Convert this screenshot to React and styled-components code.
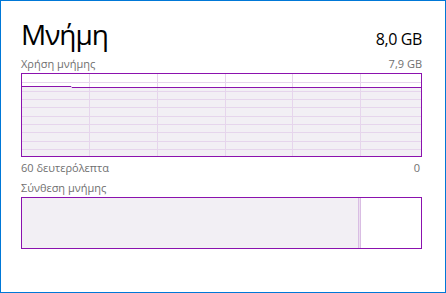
import React from 'react'
import styled, { createGlobalStyle } from 'styled-components'

const GlobalStyle = createGlobalStyle`
  html, body {
    margin: 0;
    padding: 0;
    background: #fff;
  }
  body {
    font-family: "Open Sans", "Noto Sans", "DejaVu Sans", sans-serif;
  }
`

const PURPLE = '#8b12ae'
const GRID = '#e6d5ec'
const FILL = '#f2eff4'

const Window = styled.div`
  box-sizing: border-box;
  width: 446px;
  height: 293px;
  border: 1px solid #0078d7;
  padding: 14px 23px 0 20px;
  display: flex;
  flex-direction: column;
`

const HeaderRow = styled.div`
  display: flex;
  justify-content: space-between;
  align-items: baseline;
  height: 38px;
`

const Title = styled.h1`
  margin: 0;
  font-size: 28px;
  font-weight: 400;
  letter-spacing: -1px;
  color: #000;
  line-height: 38px;
`

const Total = styled.span`
  font-size: 16px;
  letter-spacing: -0.4px;
  color: #000;
  line-height: 20px;
`

const LabelRow = styled.div`
  display: flex;
  justify-content: space-between;
  align-items: center;
  height: ${p => p.$h || 18}px;
  font-size: 11px;
  color: #707070;
  padding-right: ${p => p.$pr || 0}px;
`

const GraphBox = styled.div`
  box-sizing: border-box;
  width: 401px;
  height: 84px;
  border: 1px solid ${PURPLE};
  background: #fff;
`

const CompositionBox = styled.div`
  box-sizing: border-box;
  width: 401px;
  height: 52px;
  border: 1px solid ${PURPLE};
  background: #fff;
  display: flex;
`

const InUse = styled.div`
  background: ${FILL};
  height: 100%;
`

const Modified = styled.div`
  box-sizing: border-box;
  width: 3px;
  height: 100%;
  border-left: 1px solid #d9bde3;
  border-right: 1px solid #d9bde3;
  background: #ecdff0;
`

const UsageGraph = () => {
  const w = 399
  const h = 82
  const hLines = Array.from({ length: 9 }, (_, i) => Math.round((i + 1) * 8.35) + 0.5)
  const vLines = Array.from({ length: 5 }, (_, i) => Math.round(67 + i * 67.75) + 0.5)
  const pts = [[0, 12.5], [49, 12.5], [50, 13.5], [w, 13.5]]
  const line = pts.map(p => p.join(',')).join(' ')
  const area = `0,${h} ${line} ${w},${h}`
  return (
    <svg width={w} height={h} style={{ display: 'block' }}>
      <polygon points={area} fill={FILL} />
      {hLines.map(y => (
        <line key={'h' + y} x1={0} x2={w} y1={y} y2={y} stroke={GRID} strokeWidth={1} />
      ))}
      {vLines.map(x => (
        <line key={'v' + x} x1={x} x2={x} y1={0} y2={h} stroke={GRID} strokeWidth={1} />
      ))}
      <polyline points={line} fill="none" stroke={PURPLE} strokeWidth={1} />
    </svg>
  )
}

export default function App() {
  return (
    <>
      <GlobalStyle />
      <Window>
        <HeaderRow>
          <Title>Μνήμη</Title>
          <Total>8,0 GB</Total>
        </HeaderRow>
        <LabelRow $h={20} $pr={0}>
          <span>Χρήση μνήμης</span>
          <span>7,9 GB</span>
        </LabelRow>
        <GraphBox>
          <UsageGraph />
        </GraphBox>
        <LabelRow $h={20} $pr={2}>
          <span>60 δευτερόλεπτα</span>
          <span>0</span>
        </LabelRow>
        <LabelRow $h={20}>
          <span>Σύνθεση μνήμης</span>
        </LabelRow>
        <CompositionBox>
          <InUse style={{ width: `${(336 / 399) * 100}%` }} />
          <Modified />
        </CompositionBox>
      </Window>
    </>
  )
}
